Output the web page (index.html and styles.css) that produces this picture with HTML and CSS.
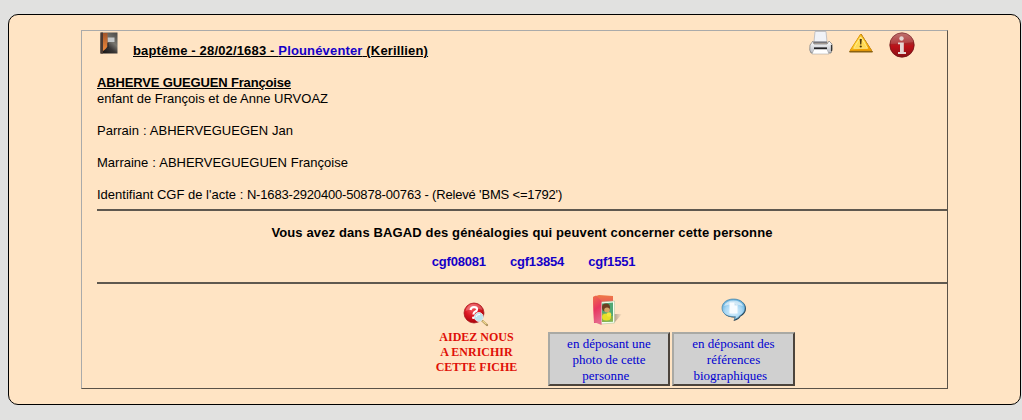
FILE: index.html
```html
<!DOCTYPE html>
<html lang="fr">
<head>
    <meta charset="UTF-8">
    <title>Fiche baptême</title>
    <link rel="stylesheet" href="styles.css">
</head>
<body>

<div class="page">
    <div class="fiche">

        <!-- Title and tools -->
        <div class="header">
            <svg class="icon-register" width="18" height="22" viewBox="0 0 18 22">
                <defs>
                    <linearGradient id="book" x1="1" y1="0" x2="0.3" y2="1">
                        <stop offset="0" stop-color="#4a4846"/>
                        <stop offset="0.45" stop-color="#77756f"/>
                        <stop offset="0.7" stop-color="#3a3737"/>
                        <stop offset="1" stop-color="#1c1a1b"/>
                    </linearGradient>
                    <linearGradient id="ribbon" x1="0" y1="0" x2="0" y2="1">
                        <stop offset="0" stop-color="#a3552a"/>
                        <stop offset="1" stop-color="#f08a3c"/>
                    </linearGradient>
                </defs>
                <rect x="0.5" y="0.5" width="17" height="21" fill="url(#book)"/>
                <path d="M0.5 0.5H3V21.5H0.5Z" fill="#4b3a33"/>
                <path d="M7.500 5.500H14.500V10H7.500Z" fill="#c3c6c7"/>
                <path d="M3 1H7.500V14.500L5.500 17L3 19Z" fill="url(#ribbon)"/>
                <path d="M8 11V16" stroke="#262324"/>
            </svg>
            <h1>baptême - 28/02/1683 - <a href="#">Plounéventer</a> (Kerillien)</h1>
            <div class="tools">
                <svg width="24" height="24" viewBox="0 0 24 24">
                    <defs>
                        <linearGradient id="printer" x1="0" y1="0" x2="0" y2="1">
                            <stop offset="0" stop-color="#ffffff"/>
                            <stop offset="1" stop-color="#b9bcc4"/>
                        </linearGradient>
                    </defs>
                    <path d="M6 0.500H17L18 11H5Z" fill="#f0f2f7" stroke="#b5b7be" stroke-width="0.800"/>
                    <path d="M4 10L1 14Q0 20 2 22H22Q24 19 23 13L20 10L18 13H5Z" fill="url(#printer)" stroke="#777" stroke-width="0.700"/>
                    <path d="M5 10.500H18L18.500 12.500H4.500Z" fill="#77777c"/>
                    <path d="M5 17.300H18" stroke="#19191b" stroke-width="1.800"/>
                    <path d="M5 18.300H18L20 23H3Z" fill="#fff" stroke="#999" stroke-width="0.500"/>
                    <path d="M22.500 14V20" stroke="#333" stroke-width="1.200"/>
                </svg>
                <svg class="icon-warning" width="24" height="20" viewBox="0 0 24 20">
                    <defs>
                        <linearGradient id="warn" x1="0" y1="0" x2="0.300" y2="1">
                            <stop offset="0" stop-color="#f4b320"/>
                            <stop offset="0.6" stop-color="#ffdf48"/>
                            <stop offset="1" stop-color="#f0a000"/>
                        </linearGradient>
                    </defs>
                    <path d="M12 1L23.500 19H0.500Z" fill="#8a6212" stroke="#8a6212" stroke-linejoin="round"/>
                    <path d="M11.700 1L22.500 17.500H1Z" fill="url(#warn)" stroke="#e99c08" stroke-width="0.800" stroke-linejoin="round"/>
                    <path d="M11.700 4L18.700 15.300H4.700Z" fill="#ffda55" stroke="#fff0a0" stroke-width="0.800"/>
                    <path d="M10.700 6H12.800L12.300 11.500H11.200Z" fill="#4c370d"/>
                    <circle cx="11.750" cy="13.500" r="1.100" fill="#4c370d"/>
                </svg>
                <svg class="icon-info" width="26" height="26" viewBox="0 0 26 26">
                    <defs>
                        <linearGradient id="info" x1="0" y1="0" x2="0" y2="1">
                            <stop offset="0" stop-color="#b4605b"/>
                            <stop offset="0.45" stop-color="#a92124"/>
                            <stop offset="0.55" stop-color="#bd1119"/>
                            <stop offset="1" stop-color="#881014"/>
                        </linearGradient>
                    </defs>
                    <circle cx="13" cy="13" r="12.200" fill="url(#info)" stroke="#711417" stroke-width="0.800"/>
                    <path d="M1.500 12A11.500 11.500 0 0 1 24.500 10Q13 12 1.500 12Z" fill="#fff" opacity="0.130"/>
                    <circle cx="12.500" cy="6.500" r="2.200" fill="#e6d6d3"/>
                    <path d="M9 10.500H14.800V20H17V22H9V20H11V12.300H9Z" fill="#e6d6d3"/>
                </svg>
            </div>
        </div>

        <!-- Record -->
        <div class="record">
            <h2>ABHERVE GUEGUEN Françoise</h2>
            <p class="parents">enfant de François et de Anne URVOAZ</p>
            <p class="godfather">Parrain : ABHERVEGUEGEN Jan</p>
            <p class="godmother">Marraine : ABHERVEGUEGUEN Françoise</p>
            <p>Identifiant CGF de l'acte : <span class="act-id">N-1683-2920400-50878-00763 - (Relevé 'BMS &lt;=1792')</span></p>
        </div>

        <!-- Related genealogies -->
        <div class="genealogies">
            <h3>Vous avez dans BAGAD des généalogies qui peuvent concerner cette personne</h3>
            <div class="links">
                <a href="#">cgf08081</a>
                <a href="#">cgf13854</a>
                <a href="#">cgf1551</a>
            </div>
        </div>

        <!-- Contribution -->
        <div class="contribute">
            <div class="help">
                <svg width="26" height="26" viewBox="0 0 26 26">
                    <defs>
                        <radialGradient id="help" cx="0.4" cy="0.3" r="0.7">
                            <stop offset="0" stop-color="#f3555a"/>
                            <stop offset="0.5" stop-color="#dc1822"/>
                            <stop offset="1" stop-color="#a9040c"/>
                        </radialGradient>
                    </defs>
                    <circle cx="11" cy="11" r="10" fill="url(#help)" stroke="#a41118" stroke-width="0.700"/>
                    <path d="M2.500 9Q4 2 11 1.800Q18 2 19.500 8Q11 5 2.500 9Z" fill="#fff" opacity="0.250"/>
                    <path d="M7.500 8Q8 5 11 5Q14.200 5 14 7.700Q13.800 9.300 11.500 10Q10.500 10.800 10.500 12.500" fill="none" stroke="#fff" stroke-width="2.200"/>
                    <circle cx="10.300" cy="15.700" r="1.300" fill="#fff"/>
                    <path d="M19 18.500L24 23" stroke="#a58a55" stroke-width="2.200" stroke-linecap="round"/>
                    <path d="M19.500 18.800L23.500 22.300" stroke="#f0d98e" stroke-width="1.200"/>
                    <circle cx="15.800" cy="15" r="4.400" fill="#bce4ee" stroke="#e2edf0" stroke-width="1"/>
                    <path d="M13 15Q13.500 12 17 12.500" fill="none" stroke="#fff"/>
                </svg>
                <p>AIDEZ NOUS<br>A ENRICHIR<br>CETTE FICHE</p>
            </div>
            <div class="choice">
                <svg class="icon-folder" width="32" height="32" viewBox="0 0 32 32">
                    <defs>
                        <linearGradient id="folder" x1="0" y1="0" x2="0" y2="1">
                            <stop offset="0" stop-color="#ee7945"/>
                            <stop offset="0.5" stop-color="#e94565"/>
                            <stop offset="1" stop-color="#dd477e"/>
                        </linearGradient>
                        <linearGradient id="side" x1="0" y1="0" x2="0.2" y2="1">
                            <stop offset="0" stop-color="#f0704a"/>
                            <stop offset="0.5" stop-color="#e8365f"/>
                            <stop offset="1" stop-color="#e66a8c"/>
                        </linearGradient>
                        <linearGradient id="shadow" x1="0" y1="0" x2="1" y2="0">
                            <stop offset="0" stop-color="#76695c"/>
                            <stop offset="1" stop-color="#76695c" stop-opacity="0"/>
                        </linearGradient>
                    </defs>
                    <path d="M22 20L31 20L24 28H17Z" fill="url(#shadow)"/>
                    <path d="M2 3L8 1L22 2L22 27L3 29Z" fill="url(#folder)"/>
                    <path d="M10 8L23.500 7V29L10 30Z" fill="#f5fff1" stroke="#a7ba91" stroke-width="0.500"/>
                    <path d="M11 9.500L22 8.500V27.500L11 28Z" fill="#51a774"/>
                    <path d="M11 19L22 22V27.500L11 28Z" fill="#89b34a"/>
                    <circle cx="15" cy="13.500" r="4" fill="#6c3f22"/>
                    <ellipse cx="16" cy="16" rx="2.800" ry="2.500" fill="#d6a565"/>
                    <ellipse cx="15.500" cy="23" rx="4.500" ry="3.500" fill="#e7df28"/>
                    <circle cx="18" cy="20.500" r="2.300" fill="#f5e63d"/>
                    <path d="M2 3L5 1.500L10.500 7V31L3 28Z" fill="url(#side)"/>
                </svg>
                <a class="button" href="#">en déposant une<br>photo de cette<br>personne&nbsp;&nbsp;</a>
            </div>
            <div class="choice choice-wide">
                <svg class="icon-bubble" width="26" height="24" viewBox="0 0 26 24">
                    <defs>
                        <radialGradient id="bubble" cx="0.5" cy="0.6" r="0.6">
                            <stop offset="0" stop-color="#e3f5ff"/>
                            <stop offset="0.6" stop-color="#a8d7f4"/>
                            <stop offset="1" stop-color="#5eacd9"/>
                        </radialGradient>
                    </defs>
                    <path d="M13 1.500C6 1.500 1.500 5.500 1.500 10.500C1.500 15.500 6 19.500 12.500 19.500H14L12.500 23Q18 21.500 19.500 18.500Q25 15.500 25 10.500C25 5.500 20 1.500 13 1.500Z" fill="#243e50"/>
                    <path d="M12.500 1C5.500 1 1 5 1 10C1 15 5.500 18.700 12.500 18.700H14.500L13.300 21.500Q17.500 20.500 18.700 17.800Q24 15 24 10C24 5 19.500 1 12.500 1Z" fill="url(#bubble)" stroke="#4a86aa" stroke-width="0.700"/>
                    <path d="M3 8Q5 2.500 12.500 2.500Q20 2.500 22 8Q12 4.500 3 8Z" fill="#fff" opacity="0.550"/>
                    <path d="M8.500 4.500H13.500L16.500 7.500V15.500H8.500Z" fill="#f8fcff"/>
                    <path d="M13.500 4.500V7.500H16.500Z" fill="#c7e1f1"/>
                </svg>
                <a class="button" href="#">en déposant des<br>références<br>biographiques&nbsp;&nbsp;</a>
            </div>
        </div>

    </div>
</div>

</body>
</html>
```
FILE: styles.css
```css
body {
    margin: 0;
    padding: 14px 0 0 8px;
    background-color: #e1e1e0;
    font-family: Arial, "Liberation Sans", sans-serif;
    font-size: 13px;
    line-height: 16px;
    color: #000;
}

* {
    box-sizing: border-box;
}

h1, h2, h3, p {
    margin: 0;
    font-size: 13px;
}

a {
    color: #1400c8;
    text-decoration: none;
}

svg {
    display: block;
    flex: none;
}

.page {
    width: 1013px;
    height: 391px;
    padding: 15px 0 0 72px;
    background-color: #ffe4c4;
    border: 1px solid #000;
    border-radius: 10px;
}

.fiche {
    width: 867px;
    height: 359px;
    padding-left: 15px;
    border: 1px solid;
    border-color: #aaa #5a5248 #5a5248 #aaa;
}

/* Title and tools */
.header {
    display: flex;
    align-items: flex-start;
    height: 44px;
}

.icon-register {
    margin: 1px 15px 0 3px;
}

h1 {
    padding-top: 12px;
    letter-spacing: 0.16px;
    text-decoration: underline;
    white-space: nowrap;
}

.tools {
    display: flex;
    align-items: flex-start;
    gap: 16px;
    margin: 0 32px 0 auto;
}

.icon-warning {
    margin-top: 2px;
}

.icon-info {
    margin-top: 1px;
}

/* Record */
.record {
    height: 134px;
}

h2 {
    letter-spacing: -0.15px;
    text-decoration: underline;
}

.parents, .godfather, .godmother {
    margin-bottom: 16px;
}

.godfather, .godmother {
    word-spacing: 0.4px;
}

.act-id {
    letter-spacing: -0.17px;
}

/* Related genealogies */
.genealogies {
    height: 75px;
    padding-top: 14px;
    border-top: 2px solid #5f584f;
    border-bottom: 2px solid #5f584f;
    text-align: center;
    font-weight: bold;
}

h3 {
    letter-spacing: 0.13px;
}

.links {
    display: flex;
    justify-content: center;
    gap: 24px;
    margin: 13px 0 0 23px;
    letter-spacing: -0.18px;
}

/* Contribution */
.contribute {
    display: flex;
    gap: 2px;
    padding: 10px 0 0 328px;
    font-family: "Times New Roman", "Liberation Serif", serif;
}

.help {
    display: flex;
    flex-direction: column;
    align-items: center;
    width: 103px;
    margin-right: 18px;
    padding-top: 8px;
}

.help svg {
    margin: 0 2px 2px 0;
}

.help p {
    font-size: 12px;
    font-weight: bold;
    line-height: 15px;
    text-align: center;
    color: #e01008;
    white-space: nowrap;
}

.choice {
    display: flex;
    flex-direction: column;
    align-items: center;
    justify-content: space-between;
    width: 122px;
    height: 92px;
}

.choice-wide {
    width: 123px;
}

.icon-folder {
    margin-right: 4px;
}

.icon-bubble {
    margin-top: 4px;
}

.button {
    width: 100%;
    height: 54px;
    padding-top: 2px;
    background-color: #d0d0d0;
    border: 2px solid;
    border-color: #a9a9a4 #4c443c #4c443c #a9a9a4;
    text-align: center;
    color: #0000d0;
}
```
